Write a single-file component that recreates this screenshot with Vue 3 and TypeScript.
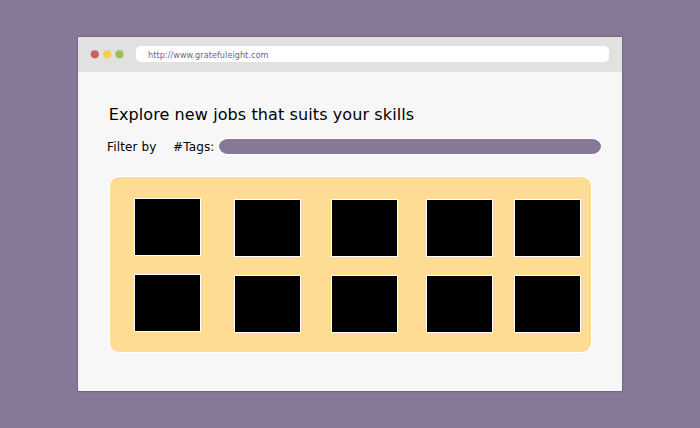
<script setup lang="ts">
import { ref } from 'vue'

const url = ref<string>('http://www.gratefuleight.com')
const jobRows: number[][] = [
  [1, 2, 3, 4, 5],
  [6, 7, 8, 9, 10],
]
</script>

<template>
  <main class="desktop">
    <section class="browser">
      <header class="toolbar">
        <svg class="controls" viewBox="0 0 45 16">
          <circle class="red" cx="3.8" cy="8.3" r="4.1" />
          <circle class="yellow" cx="16.1" cy="8.3" r="4.1" />
          <circle class="green" cx="28.4" cy="8.3" r="4.1" />
        </svg>
        <div class="address">{{ url }}</div>
      </header>
      <div class="content">
        <h1 class="title">Explore new jobs that suits your skills</h1>
        <div class="filters">
          <span class="filter-label">Filter by</span>
          <span class="tags-label">#Tags:</span>
          <div class="tag-field"></div>
        </div>
        <div class="jobs">
          <div v-for="(row, index) in jobRows" :key="index" class="job-row">
            <div v-for="job in row" :key="job" class="job"></div>
          </div>
        </div>
      </div>
    </section>
  </main>
</template>

<style>
body {
  margin: 0;
}
</style>

<style scoped>
.desktop {
  box-sizing: border-box;
  width: 700px;
  height: 428px;
  padding: 37px 78px;
  overflow: hidden;
  background: #887898;
  color: #000;
  font-family: "DejaVu Sans", sans-serif;
}
.browser {
  width: 544px;
  height: 354px;
  border-radius: 1px;
  background: #f7f7f7;
  box-shadow: 0 0 0 1px #756788, 0 1px 2px #756788;
}
.toolbar {
  box-sizing: border-box;
  display: flex;
  align-items: center;
  height: 35px;
  padding: 0 0 1px 13px;
  background: #e1e1e1;
}
.controls {
  flex: none;
  width: 45px;
  height: 16px;
  overflow: visible;
}
.red {
  fill: #c9625c;
}
.yellow {
  fill: #f7ce4d;
}
.green {
  fill: #9dbd55;
}
.address {
  box-sizing: border-box;
  flex: none;
  width: 473px;
  height: 16px;
  padding-left: 12px;
  border-radius: 5px;
  background: #fff;
  color: #706487;
  font-family: "DejaVu Sans Condensed", "DejaVu Sans", sans-serif;
  font-size: 9px;
  font-stretch: condensed;
  letter-spacing: 0.06px;
  line-height: 19px;
  white-space: nowrap;
}
.content {
  padding: 33px 21px 0 29px;
}
.title {
  height: 20px;
  margin: 0 0 0 1.7px;
  font-size: 16px;
  font-weight: 400;
  letter-spacing: 0.1px;
  line-height: 20px;
  white-space: nowrap;
}
.filters {
  display: flex;
  height: 15px;
  margin-top: 14px;
  font-size: 12px;
  letter-spacing: 0.15px;
  line-height: 16px;
  white-space: nowrap;
}
.filter-label {
  width: 66px;
}
.tags-label {
  width: 46px;
}
.tag-field {
  width: 382px;
  height: 15px;
  border-radius: 9px / 7.5px;
  background: #887898;
  box-shadow: 0 0 0 1px #fff;
}
.jobs {
  box-sizing: border-box;
  display: flex;
  flex-direction: column;
  gap: 18px;
  width: 481px;
  height: 175px;
  margin: 23px 0 0 3px;
  padding: 21px 10px 0 24px;
  border-radius: 9px;
  background: #ffdc94;
  box-shadow: 0 0 0 1px #fff;
}
.job-row {
  display: grid;
  grid-template-columns: 100px 97px 95px 88px 67px;
}
.job {
  box-sizing: border-box;
  width: 67px;
  height: 58px;
  border: 1px solid #fff;
  background: #000;
}
.job:not(:first-child) {
  margin-top: 1px;
  margin-bottom: -1px;
}
</style>
